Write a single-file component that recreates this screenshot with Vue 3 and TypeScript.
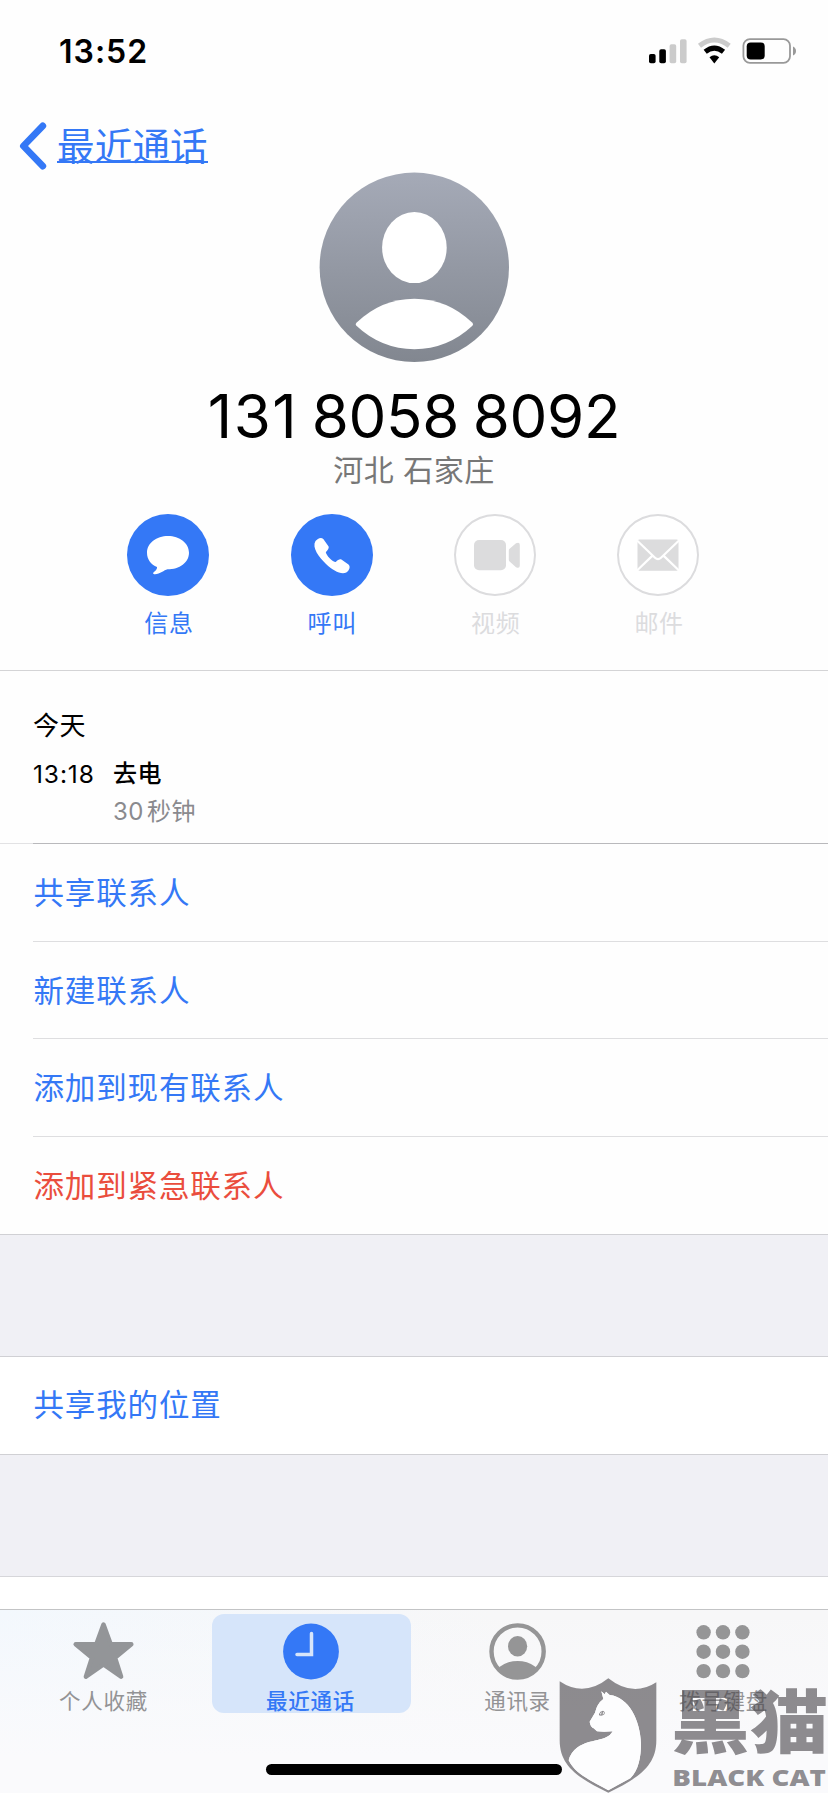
<script setup lang="ts">
interface Action {
  id: 'message' | 'call' | 'video' | 'mail'
  label: string
  enabled: boolean
}
interface Row {
  label: string
  danger?: boolean
}
interface Tab {
  id: 'star' | 'clock' | 'person' | 'keypad'
  label: string
  active?: boolean
}

const actions: Action[] = [
  { id: 'message', label: '信息', enabled: true },
  { id: 'call', label: '呼叫', enabled: true },
  { id: 'video', label: '视频', enabled: false },
  { id: 'mail', label: '邮件', enabled: false },
]
const rows: Row[] = [
  { label: '共享联系人' },
  { label: '新建联系人' },
  { label: '添加到现有联系人' },
  { label: '添加到紧急联系人', danger: true },
]
const tabs: Tab[] = [
  { id: 'star', label: '个人收藏' },
  { id: 'clock', label: '最近通话', active: true },
  { id: 'person', label: '通讯录' },
  { id: 'keypad', label: '拨号键盘' },
]
const keys: number[] = [8.6, 28, 47.4]
</script>

<template>
  <div class="phone">
    <header class="status">
      <span class="time">13:52</span>
      <svg class="indicators" width="150" height="28" viewBox="0 0 150 28">
        <rect x="1" y="17" width="6.6" height="9.3" rx="1.8" />
        <rect x="11.3" y="12.3" width="6.6" height="14" rx="1.8" />
        <g fill="#cbcbcb">
          <rect x="21.6" y="7.3" width="6.6" height="19" rx="1.8" />
          <rect x="32" y="2.3" width="6.6" height="24" rx="1.8" />
        </g>
        <g fill="none" stroke-width="5">
          <path d="M51.5 8.7Q66.3-2.7 81.2 8.7" stroke="#cbcbcb" />
          <path d="M57.2 14.8Q66.3 7.4 75.5 14.8" stroke="#000" />
        </g>
        <path d="M61.5 20.3Q66.3 16.4 71.2 20.3L66.3 26.4Z" />
        <rect x="95.4" y="2.2" width="46.6" height="23.6" rx="6.5" fill="none" stroke="#999" stroke-width="1.8" />
        <rect x="98.7" y="5.4" width="18" height="17" rx="4" />
        <path d="M145 9.5Q148 11 148 14Q148 17 145 18.5Z" fill="#999" />
      </svg>
    </header>

    <nav class="back">
      <svg width="30" height="50" viewBox="0 0 30 50">
        <path d="M24.8 4.9L5.4 25L24.8 45.1" fill="none" stroke="#3478f6" stroke-width="6.8" stroke-linecap="round" stroke-linejoin="round" />
      </svg>
      <a class="back-label">最近通话</a>
    </nav>

    <section class="profile">
      <svg class="avatar" width="190" height="190" viewBox="0 0 190 190">
        <defs>
          <linearGradient id="avatarFill" x1="0" y1="0" x2="0" y2="1">
            <stop offset="0" stop-color="#a5aab7" />
            <stop offset="1" stop-color="#828790" />
          </linearGradient>
        </defs>
        <circle cx="95.300" cy="95.300" r="94.7" fill="url(#avatarFill)" />
        <ellipse cx="95.400" cy="75.600" rx="32.3" ry="35.5" fill="#fff" />
        <path d="M37.400 150.800Q62.400 126.700 95.400 126.700Q128.400 126.700 153.400 150.800Q154.900 152.300 153.400 153.800Q128.400 177.200 95.400 177.200Q62.400 177.200 37.400 153.800Q35.900 152.300 37.400 150.800Z" fill="#fff" />
      </svg>
      <h1 class="number"><span class="prefix">131</span> 8058 8092</h1>
      <p class="place">河北 石家庄</p>
      <div class="actions">
        <div v-for="a in actions" :key="a.id" class="action" :class="{ disabled: !a.enabled }">
          <div class="bubble">
            <svg v-if="a.id === 'message'" width="82" height="82" viewBox="0 0 82 82" fill="#fff">
              <path d="M41 22C52.500 22 62 29.100 62 38.700C62 48.500 52.500 55.300 40.500 55.300C37 56 33 60.300 28 60.300C25.600 60.300 25.800 58.700 27.200 57.700C29 56.500 30.300 54.700 30 53C24 50.500 20 45.300 20 38.700C20 29.100 29.500 22 41 22Z" />
            </svg>
            <svg v-else-if="a.id === 'call'" width="82" height="82" viewBox="0 0 82 82" fill="#fff">
              <path d="M24.500 27C26.500 24.700 29.800 22.700 32.300 25L37.600 32.500C38.400 34.200 36.500 36.500 34.800 38.300C35.200 41.500 41.500 48 44.800 48C46.800 46.200 48.700 44.800 50.400 45.600L57.500 50.400C60 52.600 58 56.700 55.300 58.500C50 61 42 56.500 35 50C28 43.200 20.500 33.500 24.500 27Z" />
            </svg>
            <svg v-else-if="a.id === 'video'" width="82" height="82" viewBox="0 0 82 82" fill="#dcdcdd">
              <rect x="20" y="26" width="32" height="30.300" rx="5" />
              <path d="M54.800 36.500Q54.800 35.500 55.600 34.800L62 29.200Q65.800 27.500 65.800 31V51.500Q65.800 55 62 53.200L55.600 47.500Q54.800 46.800 54.800 45.800Z" />
            </svg>
            <svg v-else width="82" height="82" viewBox="0 0 82 82">
              <rect x="20.500" y="25.500" width="41" height="31.300" rx="1.800" fill="#dcdcdd" />
              <path d="M20 26.500L38 43.800Q41 46.600 44 43.800L62 26.500M20 56.500L35.500 41.600M62 56.500L46.500 41.600" fill="none" stroke="#fff" stroke-width="2.200" />
            </svg>
          </div>
          <span class="action-label">{{ a.label }}</span>
        </div>
      </div>
    </section>

    <section class="log">
      <h2 class="day">今天</h2>
      <div class="call">
        <span class="call-time">13:18</span>
        <span class="call-kind">去电</span>
        <span class="call-length">30<i class="thin" />秒钟</span>
      </div>
    </section>

    <ul class="rows">
      <li v-for="r in rows" :key="r.label" class="row" :class="{ danger: r.danger }">{{ r.label }}</li>
    </ul>
    <div class="gap" />
    <ul class="rows single">
      <li class="row">共享我的位置</li>
    </ul>
    <div class="gap" />
    <div class="next" />

    <footer class="tabbar">
      <div v-for="t in tabs" :key="t.id" class="tab" :class="[t.id, { active: t.active }]">
        <div class="tab-inner">
          <svg v-if="t.id === 'star'" width="64" height="60" viewBox="0 0 64 60">
            <path d="M31.500 3.600L38.700 23.300L59.300 23.300L43 36.700L49.100 55.700L31.500 43.500L13.900 55.700L20 36.700L3.700 23.300L24.300 23.300Z" fill="#939598" stroke="#939598" stroke-width="4.500" stroke-linejoin="round" />
          </svg>
          <svg v-else-if="t.id === 'clock'" width="56" height="60" viewBox="0 0 56 60">
            <circle cx="28" cy="30.500" r="27.900" fill="#3478f6" />
            <path d="M28.500 12.500V33.500H14" fill="none" stroke="#d7e5fa" stroke-width="3.500" stroke-linecap="round" />
          </svg>
          <svg v-else-if="t.id === 'person'" width="58" height="60" viewBox="0 0 58 60">
            <defs>
              <clipPath id="badge"><circle cx="28.600" cy="30.500" r="27" /></clipPath>
            </defs>
            <circle cx="28.600" cy="30.500" r="26.100" fill="none" stroke="#959596" stroke-width="4.400" />
            <ellipse cx="28.600" cy="25.200" rx="9.600" ry="10.300" fill="#959596" />
            <ellipse cx="28.600" cy="58" rx="24" ry="18" fill="#959596" clip-path="url(#badge)" />
          </svg>
          <svg v-else width="56" height="60" viewBox="0 0 56 60" fill="#959596">
            <template v-for="y in keys" :key="y">
              <circle v-for="x in keys" :key="x" :cx="x" :cy="y + 2.700" r="7.200" />
            </template>
          </svg>
          <span class="tab-label">{{ t.label }}</span>
        </div>
      </div>
    </footer>
    <div class="home" />

    <svg class="brand" width="271.330" height="116.330" viewBox="410 350 814 349">
      <g fill="#48454a" fill-opacity=".61">
        <path fill-rule="evenodd" d="M418 363Q491 412 564 354Q637 412 708 366V540C708 620 650 655 564 697C478 655 418 620 418 540ZM543 393L549 416Q530 430 524 457L508 484Q510 500 520 504L530 513Q550 515 577 513C560 545 510 534 470 562Q450 577 445 600C464 640 510 660 564 690Q600 670 630 654C655 628 662 590 662 550C660 480 625 410 568 404L557 394L553 402Z" />
        <text x="752" y="563" font-size="208" font-weight="900" textLength="472" lengthAdjust="spacingAndGlyphs" class="brand-cn">黑猫</text>
        <text x="756" y="677" font-size="68" font-weight="800" textLength="461" lengthAdjust="spacingAndGlyphs" class="brand-en">BLACK CAT</text>
      </g>
      <path d="M543 393L549 416Q530 430 524 457L508 484Q510 500 520 504L530 513Q550 515 577 513C560 545 510 534 470 562Q450 577 445 600C464 640 510 660 564 690Q600 670 630 654C655 628 662 590 662 550C660 480 625 410 568 404L557 394L553 402Z" fill="#fdfdfe" />
      <path d="M536 461Q539 452 548 451Q556 455 552 462Q546 468 536 465Z" fill="#8e8c8f" />
      <path d="M539 460L544 454L542 464ZM548 454L552 458L547 463Z" fill="#fdfdfe" />
    </svg>
  </div>
</template>

<style>
body {
  margin: 0;
  background: #fff;
}
</style>

<style scoped>
.phone {
  position: relative;
  display: flex;
  flex-direction: column;
  width: 828px;
  height: 1793px;
  overflow: hidden;
  background: #fefefe;
  color: #000;
  font-family: Inter, "Noto Sans CJK SC", sans-serif;
}
h1, h2, p, ul {
  margin: 0;
  padding: 0;
  font-weight: 400;
  list-style: none;
}
.status {
  display: flex;
  justify-content: space-between;
  align-items: center;
  height: 102px;
  padding: 0 30px 0 59px;
}
.time {
  font-size: 32px;
  font-weight: 600;
  letter-spacing: 1px;
}
.back {
  display: flex;
  align-items: center;
  height: 88px;
  margin-bottom: -18px;
  padding-left: 18px;
}
.back-label {
  margin-left: 9px;
  padding-top: 1px;
  font-size: 37.500px;
  line-height: 56px;
  letter-spacing: 0.200px;
  color: #3478f6;
  background: linear-gradient(#3478f6, #3478f6) 0 43px / 100% 2px no-repeat;
}
.profile {
  display: flex;
  flex-direction: column;
  align-items: center;
  height: 499px;
  border-bottom: 1px solid #d4d4d6;
  box-sizing: border-box;
}
.avatar {
  flex: none;
}
.number {
  height: 72px;
  margin-top: 18px;
  font-size: 60px;
  line-height: 72px;
  font-kerning: none;
  letter-spacing: -0.300px;
  word-spacing: -3px;
  white-space: nowrap;
}
.prefix {
  letter-spacing: 1.500px;
}
.place {
  height: 38px;
  font-size: 30px;
  line-height: 36px;
  letter-spacing: 0.500px;
  color: #777;
}
.actions {
  display: grid;
  grid-template-columns: repeat(4, 163.400px);
  margin-top: 24px;
}
.action {
  display: flex;
  flex-direction: column;
  align-items: center;
  color: #3478f6;
}
.bubble {
  width: 82px;
  height: 82px;
  margin-right: 1.400px;
  border-radius: 50%;
  background: #3478f6;
}
.bubble svg {
  display: block;
}
.action-label {
  margin-top: 10px;
  font-size: 24px;
  line-height: 36px;
  letter-spacing: 0.700px;
}
.disabled {
  color: #dcdcde;
}
.disabled .bubble {
  background: #fff;
  box-shadow: inset 0 0 0 2px #dcdcde;
}
.log {
  height: 172px;
  padding: 37px 0 0 33px;
  box-sizing: border-box;
}
.day {
  height: 36px;
  font-size: 26px;
  line-height: 36px;
  letter-spacing: 0.500px;
}
.call {
  display: grid;
  grid-template-columns: 80px auto;
  grid-template-rows: 38px 38px;
  margin-top: 11px;
  line-height: 38px;
}
.call-time {
  font-size: 24.500px;
  font-kerning: none;
  letter-spacing: 0.900px;
}
.call-kind {
  font-size: 24px;
  font-weight: 500;
  letter-spacing: 0.500px;
}
.call-length {
  grid-column: 2;
  color: #8a8a8e;
  font-size: 24px;
  letter-spacing: 0.500px;
}
.thin {
  display: inline-block;
  width: 3px;
}
.rows {
  height: 392px;
  box-sizing: border-box;
  border-bottom: 1px solid #d0d0d4;
  background: linear-gradient(#e2e2e4, #e2e2e4) 0 0 / 33px 1px no-repeat;
}
.row {
  height: 97.660px;
  margin-left: 33px;
  padding-left: 0.500px;
  box-sizing: border-box;
  border-top: 1px solid #dedee0;
  font-size: 30.500px;
  line-height: 97.500px;
  letter-spacing: 0.850px;
  color: #3478f6;
}
.row:first-child {
  border-top-color: #b9b9bc;
}
.danger {
  color: #ea4d3d;
}
.gap {
  height: 121px;
  background: #f0f0f5;
}
.single {
  height: 99px;
  border-top: 1px solid #d0d0d4;
  background: #fff;
}
.single .row {
  border: 0;
  line-height: 96px;
}
.next {
  height: 33px;
  border-top: 1px solid #d6d6da;
  background: #fff;
  box-sizing: border-box;
}
.tabbar {
  display: grid;
  grid-template-columns: repeat(4, 207px);
  height: 184px;
  border-top: 1px solid #c3c4c6;
  box-sizing: border-box;
  background: linear-gradient(180deg, rgba(250, 250, 252, 0), #fafafc 80%), linear-gradient(90deg, #f3f8fd, #f7f7f8 60%);
}
.tab {
  padding: 4px 4px 0;
  color: #939395;
}
.tab.clock {
  padding: 4px 3px 0 5px;
}
.tab.keypad {
  padding: 4px 5px 0 3px;
}
.tab-inner {
  display: flex;
  flex-direction: column;
  align-items: center;
  height: 99px;
  padding-top: 7px;
  box-sizing: border-box;
  border-radius: 12px;
}
.tab-inner svg {
  flex: none;
}
.active .tab-inner {
  padding-right: 2px;
  color: #3478f6;
  background: #d6e5fa;
}
.keypad svg {
  margin-right: 1px;
}
.tab-label {
  margin-top: 4px;
  font-size: 21.500px;
  line-height: 32px;
  letter-spacing: 0.700px;
}
.active .tab-label {
  font-weight: 500;
}
.home {
  position: absolute;
  left: 266px;
  top: 1764px;
  width: 296px;
  height: 11px;
  border-radius: 6px;
  background: #000;
}
.brand {
  position: absolute;
  left: 556.670px;
  top: 1676.670px;
  overflow: visible;
}
.brand-cn {
  font-family: "Noto Sans CJK SC", sans-serif;
}
.brand-en {
  font-family: "Open Sans", sans-serif;
}
</style>
